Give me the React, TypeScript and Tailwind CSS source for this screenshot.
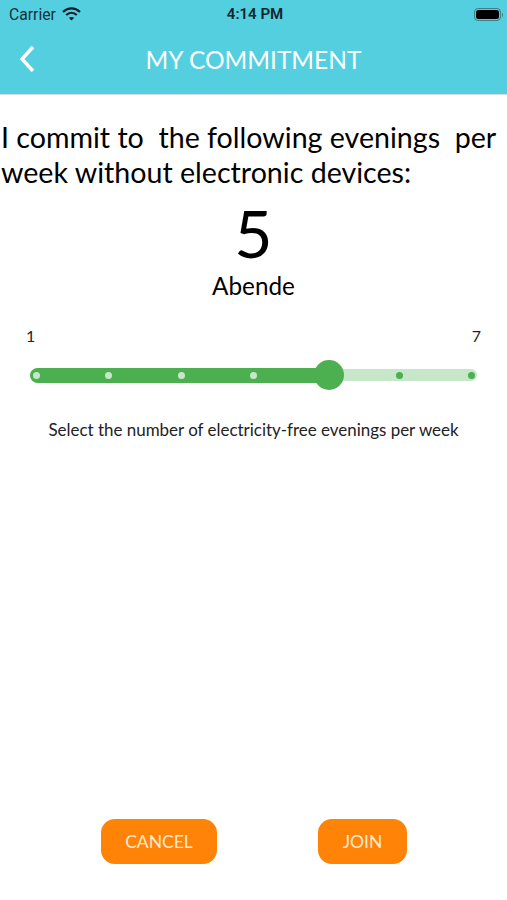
const dots = [1, 2, 3, 4, 5, 6, 7];

function Wifi() {
  return (
    <svg width="19" height="14" viewBox="0 0 19 14" fill="none" stroke="#14202a" strokeWidth="2.2">
      <path d="M1 5 C6 0.2 13 0.2 18 5" />
      <path d="M4.2 8 C7.4 5 11.6 5 14.8 8" />
      <path d="M9.5 13.5 L6.8 10.8 C8.4 9.6 10.6 9.6 12.2 10.8 Z" fill="#14202a" stroke="none" />
    </svg>
  );
}

function Battery() {
  return (
    <div className="flex items-center">
      <div className="h-[13px] w-[27px] rounded-[4px] border border-[#3b7f8c] p-[1px]">
        <div className="h-full w-full rounded-[2.5px] bg-black" />
      </div>
      <div className="ml-[1px] h-[4px] w-[1.5px] rounded-r-sm bg-[#3b7f8c]" />
    </div>
  );
}

function Slider() {
  return (
    <div className="relative mx-[30px] flex h-[30px] items-center">
      <div className="flex h-[12px] w-full rounded-full bg-[#c8e6c9]" />
      <div className="absolute left-0 h-[15px] w-[299px] rounded-full bg-[#4caf50]" />
      <div className="absolute left-[284px] h-[30px] w-[30px] rounded-full bg-[#4caf50]" />
      {dots.map((d) =>
        d === 5 ? null : (
          <div
            key={d}
            className={`absolute h-[7px] w-[7px] rounded-full ${d < 5 ? 'bg-[#c8e6c9]' : 'bg-[#4caf50]'}`}
            style={{ left: 2.5 + (d - 1) * 72.6 }}
          />
        ),
      )}
    </div>
  );
}

export default function App() {
  return (
    <div className="flex h-[900px] w-[507px] flex-col bg-white font-['Lato','Open_Sans',sans-serif] text-black">
      <header className="h-[95px] border-b border-[#d5dcdd] bg-[#53cfe0]">
        <div className="flex h-[28px] items-center justify-between pl-[9px] pr-[4px] pt-[1px]">
          <div className="flex w-[120px] items-center gap-[6px] font-['Roboto',sans-serif] text-[15.7px] text-[#14303a]">
            Carrier
            <Wifi />
          </div>
          <div className="mr-[2px] font-['Roboto',sans-serif] text-[15px] font-semibold text-[#10252c]">4:14 PM</div>
          <div className="flex w-[120px] justify-end">
            <Battery />
          </div>
        </div>
        <div className="relative flex h-[60px] items-center justify-center pt-[4px]">
          <svg className="absolute left-[18px] top-[17px]" width="18" height="28" viewBox="0 0 18 28" fill="none" stroke="white" strokeWidth="3.4">
            <path d="M15 2 L4 14 L15 26" />
          </svg>
          <h1 className="text-[24.5px] text-white">MY COMMITMENT</h1>
        </div>
      </header>

      <main className="flex flex-1 flex-col">
        <p className="mt-[25px] pl-[1px] text-[28.6px] leading-[35px] whitespace-pre-wrap">
          I commit to  the following evenings  per week without electronic devices:
        </p>
        <div className="mt-[5px] text-center text-[66px] leading-[76px] font-normal">5</div>
        <div className="mt-0 text-center text-[24.3px] leading-[30px]">Abende</div>
        <div className="mt-[25px] flex justify-between pl-[26px] pr-[26px] text-[16px] leading-[20px] text-[#222]">
          <span>1</span>
          <span>7</span>
        </div>
        <div className="mt-[14px]">
          <Slider />
        </div>
        <p className="mt-[29px] text-center text-[16.95px] leading-[22px] text-[#222]">
          Select the number of electricity-free evenings per week
        </p>
      </main>

      <footer className="flex h-[81px] items-start pl-[101px]">
        <button className="h-[45px] w-[116px] rounded-[14px] bg-[#ff8306] pt-[2px] text-[17.5px] text-[#ffe9d0]">CANCEL</button>
        <button className="ml-[101px] h-[45px] w-[89px] rounded-[14px] bg-[#ff8306] pt-[2px] text-[17.5px] text-[#ffe9d0]">JOIN</button>
      </footer>
    </div>
  );
}
